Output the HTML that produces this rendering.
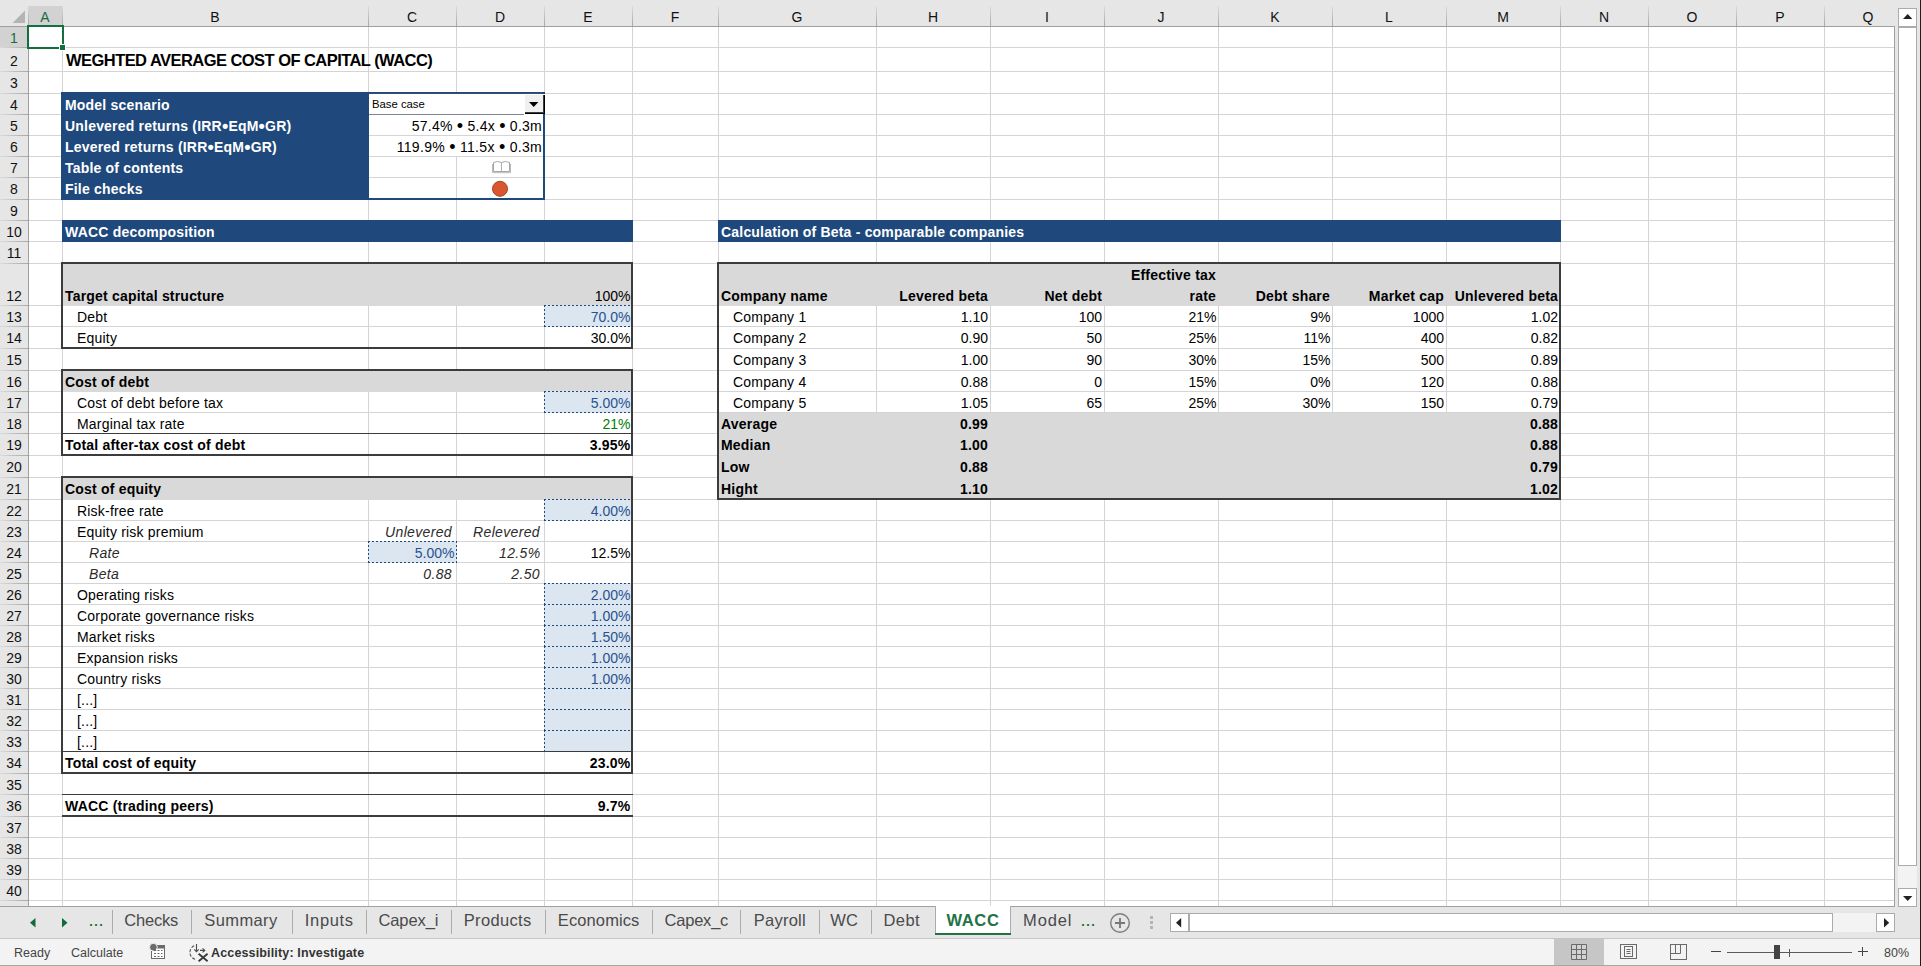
<!DOCTYPE html>
<html><head><meta charset="utf-8"><title>WACC</title><style>
html,body{margin:0;padding:0;background:#fff}
#r{position:relative;width:1921px;height:966px;overflow:hidden;background:#fff;font-family:"Liberation Sans",sans-serif;color:#000}
#r i{position:absolute;display:block}
#r b,#r span,#r em{position:absolute;white-space:nowrap;font-size:14px;line-height:16px;letter-spacing:.2px}
#r span{font-weight:400}
#r em{font-style:italic;letter-spacing:.35px;color:#2b2b2b}
#r u{text-decoration:none;font-size:18px;line-height:0;position:relative;top:1.4px}
#r .rt{text-align:right}
#r span.rt{letter-spacing:0}
#r .w{color:#fff}
#r .in{color:#27528f}
#r .h{color:#111;text-align:center;letter-spacing:0}
#r .tab{font-size:16.5px;line-height:20px;color:#4a4a4a;letter-spacing:0}
#r .st{font-size:12.5px;line-height:16px;color:#444;letter-spacing:0}
#r svg{position:absolute;overflow:visible}
</style></head><body><div id="r">
<i style="left:29px;top:47px;width:1865px;height:1px;background:#d4d4d4;"></i>
<i style="left:29px;top:71px;width:1865px;height:1px;background:#d4d4d4;"></i>
<i style="left:29px;top:93px;width:1865px;height:1px;background:#d4d4d4;"></i>
<i style="left:29px;top:114px;width:1865px;height:1px;background:#d4d4d4;"></i>
<i style="left:29px;top:135px;width:1865px;height:1px;background:#d4d4d4;"></i>
<i style="left:29px;top:156px;width:1865px;height:1px;background:#d4d4d4;"></i>
<i style="left:29px;top:177px;width:1865px;height:1px;background:#d4d4d4;"></i>
<i style="left:29px;top:199px;width:1865px;height:1px;background:#d4d4d4;"></i>
<i style="left:29px;top:220px;width:1865px;height:1px;background:#d4d4d4;"></i>
<i style="left:29px;top:241px;width:1865px;height:1px;background:#d4d4d4;"></i>
<i style="left:29px;top:263px;width:1865px;height:1px;background:#d4d4d4;"></i>
<i style="left:29px;top:305px;width:1865px;height:1px;background:#d4d4d4;"></i>
<i style="left:29px;top:326px;width:1865px;height:1px;background:#d4d4d4;"></i>
<i style="left:29px;top:348px;width:1865px;height:1px;background:#d4d4d4;"></i>
<i style="left:29px;top:370px;width:1865px;height:1px;background:#d4d4d4;"></i>
<i style="left:29px;top:391px;width:1865px;height:1px;background:#d4d4d4;"></i>
<i style="left:29px;top:412px;width:1865px;height:1px;background:#d4d4d4;"></i>
<i style="left:29px;top:433px;width:1865px;height:1px;background:#d4d4d4;"></i>
<i style="left:29px;top:455px;width:1865px;height:1px;background:#d4d4d4;"></i>
<i style="left:29px;top:477px;width:1865px;height:1px;background:#d4d4d4;"></i>
<i style="left:29px;top:499px;width:1865px;height:1px;background:#d4d4d4;"></i>
<i style="left:29px;top:520px;width:1865px;height:1px;background:#d4d4d4;"></i>
<i style="left:29px;top:541px;width:1865px;height:1px;background:#d4d4d4;"></i>
<i style="left:29px;top:562px;width:1865px;height:1px;background:#d4d4d4;"></i>
<i style="left:29px;top:583px;width:1865px;height:1px;background:#d4d4d4;"></i>
<i style="left:29px;top:604px;width:1865px;height:1px;background:#d4d4d4;"></i>
<i style="left:29px;top:625px;width:1865px;height:1px;background:#d4d4d4;"></i>
<i style="left:29px;top:646px;width:1865px;height:1px;background:#d4d4d4;"></i>
<i style="left:29px;top:667px;width:1865px;height:1px;background:#d4d4d4;"></i>
<i style="left:29px;top:688px;width:1865px;height:1px;background:#d4d4d4;"></i>
<i style="left:29px;top:709px;width:1865px;height:1px;background:#d4d4d4;"></i>
<i style="left:29px;top:730px;width:1865px;height:1px;background:#d4d4d4;"></i>
<i style="left:29px;top:751px;width:1865px;height:1px;background:#d4d4d4;"></i>
<i style="left:29px;top:773px;width:1865px;height:1px;background:#d4d4d4;"></i>
<i style="left:29px;top:794px;width:1865px;height:1px;background:#d4d4d4;"></i>
<i style="left:29px;top:816px;width:1865px;height:1px;background:#d4d4d4;"></i>
<i style="left:29px;top:837px;width:1865px;height:1px;background:#d4d4d4;"></i>
<i style="left:29px;top:858px;width:1865px;height:1px;background:#d4d4d4;"></i>
<i style="left:29px;top:879px;width:1865px;height:1px;background:#d4d4d4;"></i>
<i style="left:29px;top:900px;width:1865px;height:1px;background:#d4d4d4;"></i>
<i style="left:62px;top:27px;width:1px;height:879px;background:#d4d4d4;"></i>
<i style="left:368px;top:27px;width:1px;height:879px;background:#d4d4d4;"></i>
<i style="left:456px;top:27px;width:1px;height:879px;background:#d4d4d4;"></i>
<i style="left:544px;top:27px;width:1px;height:879px;background:#d4d4d4;"></i>
<i style="left:632px;top:27px;width:1px;height:879px;background:#d4d4d4;"></i>
<i style="left:718px;top:27px;width:1px;height:879px;background:#d4d4d4;"></i>
<i style="left:876px;top:27px;width:1px;height:879px;background:#d4d4d4;"></i>
<i style="left:990px;top:27px;width:1px;height:879px;background:#d4d4d4;"></i>
<i style="left:1104px;top:27px;width:1px;height:879px;background:#d4d4d4;"></i>
<i style="left:1218px;top:27px;width:1px;height:879px;background:#d4d4d4;"></i>
<i style="left:1332px;top:27px;width:1px;height:879px;background:#d4d4d4;"></i>
<i style="left:1446px;top:27px;width:1px;height:879px;background:#d4d4d4;"></i>
<i style="left:1560px;top:27px;width:1px;height:879px;background:#d4d4d4;"></i>
<i style="left:1648px;top:27px;width:1px;height:879px;background:#d4d4d4;"></i>
<i style="left:1736px;top:27px;width:1px;height:879px;background:#d4d4d4;"></i>
<i style="left:1824px;top:27px;width:1px;height:879px;background:#d4d4d4;"></i>
<i style="left:0px;top:0px;width:1921px;height:27px;background:#e6e6e6;"></i>
<i style="left:0px;top:26px;width:1921px;height:1px;background:#a0a0a0;"></i>
<i style="left:0px;top:27px;width:28px;height:879px;background:#e6e6e6;"></i>
<i style="left:28px;top:27px;width:1px;height:879px;background:#a0a0a0;"></i>
<i style="left:29px;top:6px;width:33px;height:20px;background:#d2d2d2;"></i>
<i style="left:0px;top:27px;width:28px;height:20px;background:#d2d2d2;"></i>
<i style="left:28px;top:6px;width:1px;height:20px;background:;background:linear-gradient(#dcdcdc,#a6a6a6)"></i>
<i style="left:62px;top:6px;width:1px;height:20px;background:;background:linear-gradient(#dcdcdc,#a6a6a6)"></i>
<i style="left:368px;top:6px;width:1px;height:20px;background:;background:linear-gradient(#dcdcdc,#a6a6a6)"></i>
<i style="left:456px;top:6px;width:1px;height:20px;background:;background:linear-gradient(#dcdcdc,#a6a6a6)"></i>
<i style="left:544px;top:6px;width:1px;height:20px;background:;background:linear-gradient(#dcdcdc,#a6a6a6)"></i>
<i style="left:632px;top:6px;width:1px;height:20px;background:;background:linear-gradient(#dcdcdc,#a6a6a6)"></i>
<i style="left:718px;top:6px;width:1px;height:20px;background:;background:linear-gradient(#dcdcdc,#a6a6a6)"></i>
<i style="left:876px;top:6px;width:1px;height:20px;background:;background:linear-gradient(#dcdcdc,#a6a6a6)"></i>
<i style="left:990px;top:6px;width:1px;height:20px;background:;background:linear-gradient(#dcdcdc,#a6a6a6)"></i>
<i style="left:1104px;top:6px;width:1px;height:20px;background:;background:linear-gradient(#dcdcdc,#a6a6a6)"></i>
<i style="left:1218px;top:6px;width:1px;height:20px;background:;background:linear-gradient(#dcdcdc,#a6a6a6)"></i>
<i style="left:1332px;top:6px;width:1px;height:20px;background:;background:linear-gradient(#dcdcdc,#a6a6a6)"></i>
<i style="left:1446px;top:6px;width:1px;height:20px;background:;background:linear-gradient(#dcdcdc,#a6a6a6)"></i>
<i style="left:1560px;top:6px;width:1px;height:20px;background:;background:linear-gradient(#dcdcdc,#a6a6a6)"></i>
<i style="left:1648px;top:6px;width:1px;height:20px;background:;background:linear-gradient(#dcdcdc,#a6a6a6)"></i>
<i style="left:1736px;top:6px;width:1px;height:20px;background:;background:linear-gradient(#dcdcdc,#a6a6a6)"></i>
<i style="left:1824px;top:6px;width:1px;height:20px;background:;background:linear-gradient(#dcdcdc,#a6a6a6)"></i>
<i style="left:0px;top:47px;width:28px;height:1px;background:;background:linear-gradient(90deg,#dcdcdc,#a6a6a6)"></i>
<i style="left:0px;top:71px;width:28px;height:1px;background:;background:linear-gradient(90deg,#dcdcdc,#a6a6a6)"></i>
<i style="left:0px;top:93px;width:28px;height:1px;background:;background:linear-gradient(90deg,#dcdcdc,#a6a6a6)"></i>
<i style="left:0px;top:114px;width:28px;height:1px;background:;background:linear-gradient(90deg,#dcdcdc,#a6a6a6)"></i>
<i style="left:0px;top:135px;width:28px;height:1px;background:;background:linear-gradient(90deg,#dcdcdc,#a6a6a6)"></i>
<i style="left:0px;top:156px;width:28px;height:1px;background:;background:linear-gradient(90deg,#dcdcdc,#a6a6a6)"></i>
<i style="left:0px;top:177px;width:28px;height:1px;background:;background:linear-gradient(90deg,#dcdcdc,#a6a6a6)"></i>
<i style="left:0px;top:199px;width:28px;height:1px;background:;background:linear-gradient(90deg,#dcdcdc,#a6a6a6)"></i>
<i style="left:0px;top:220px;width:28px;height:1px;background:;background:linear-gradient(90deg,#dcdcdc,#a6a6a6)"></i>
<i style="left:0px;top:241px;width:28px;height:1px;background:;background:linear-gradient(90deg,#dcdcdc,#a6a6a6)"></i>
<i style="left:0px;top:263px;width:28px;height:1px;background:;background:linear-gradient(90deg,#dcdcdc,#a6a6a6)"></i>
<i style="left:0px;top:305px;width:28px;height:1px;background:;background:linear-gradient(90deg,#dcdcdc,#a6a6a6)"></i>
<i style="left:0px;top:326px;width:28px;height:1px;background:;background:linear-gradient(90deg,#dcdcdc,#a6a6a6)"></i>
<i style="left:0px;top:348px;width:28px;height:1px;background:;background:linear-gradient(90deg,#dcdcdc,#a6a6a6)"></i>
<i style="left:0px;top:370px;width:28px;height:1px;background:;background:linear-gradient(90deg,#dcdcdc,#a6a6a6)"></i>
<i style="left:0px;top:391px;width:28px;height:1px;background:;background:linear-gradient(90deg,#dcdcdc,#a6a6a6)"></i>
<i style="left:0px;top:412px;width:28px;height:1px;background:;background:linear-gradient(90deg,#dcdcdc,#a6a6a6)"></i>
<i style="left:0px;top:433px;width:28px;height:1px;background:;background:linear-gradient(90deg,#dcdcdc,#a6a6a6)"></i>
<i style="left:0px;top:455px;width:28px;height:1px;background:;background:linear-gradient(90deg,#dcdcdc,#a6a6a6)"></i>
<i style="left:0px;top:477px;width:28px;height:1px;background:;background:linear-gradient(90deg,#dcdcdc,#a6a6a6)"></i>
<i style="left:0px;top:499px;width:28px;height:1px;background:;background:linear-gradient(90deg,#dcdcdc,#a6a6a6)"></i>
<i style="left:0px;top:520px;width:28px;height:1px;background:;background:linear-gradient(90deg,#dcdcdc,#a6a6a6)"></i>
<i style="left:0px;top:541px;width:28px;height:1px;background:;background:linear-gradient(90deg,#dcdcdc,#a6a6a6)"></i>
<i style="left:0px;top:562px;width:28px;height:1px;background:;background:linear-gradient(90deg,#dcdcdc,#a6a6a6)"></i>
<i style="left:0px;top:583px;width:28px;height:1px;background:;background:linear-gradient(90deg,#dcdcdc,#a6a6a6)"></i>
<i style="left:0px;top:604px;width:28px;height:1px;background:;background:linear-gradient(90deg,#dcdcdc,#a6a6a6)"></i>
<i style="left:0px;top:625px;width:28px;height:1px;background:;background:linear-gradient(90deg,#dcdcdc,#a6a6a6)"></i>
<i style="left:0px;top:646px;width:28px;height:1px;background:;background:linear-gradient(90deg,#dcdcdc,#a6a6a6)"></i>
<i style="left:0px;top:667px;width:28px;height:1px;background:;background:linear-gradient(90deg,#dcdcdc,#a6a6a6)"></i>
<i style="left:0px;top:688px;width:28px;height:1px;background:;background:linear-gradient(90deg,#dcdcdc,#a6a6a6)"></i>
<i style="left:0px;top:709px;width:28px;height:1px;background:;background:linear-gradient(90deg,#dcdcdc,#a6a6a6)"></i>
<i style="left:0px;top:730px;width:28px;height:1px;background:;background:linear-gradient(90deg,#dcdcdc,#a6a6a6)"></i>
<i style="left:0px;top:751px;width:28px;height:1px;background:;background:linear-gradient(90deg,#dcdcdc,#a6a6a6)"></i>
<i style="left:0px;top:773px;width:28px;height:1px;background:;background:linear-gradient(90deg,#dcdcdc,#a6a6a6)"></i>
<i style="left:0px;top:794px;width:28px;height:1px;background:;background:linear-gradient(90deg,#dcdcdc,#a6a6a6)"></i>
<i style="left:0px;top:816px;width:28px;height:1px;background:;background:linear-gradient(90deg,#dcdcdc,#a6a6a6)"></i>
<i style="left:0px;top:837px;width:28px;height:1px;background:;background:linear-gradient(90deg,#dcdcdc,#a6a6a6)"></i>
<i style="left:0px;top:858px;width:28px;height:1px;background:;background:linear-gradient(90deg,#dcdcdc,#a6a6a6)"></i>
<i style="left:0px;top:879px;width:28px;height:1px;background:;background:linear-gradient(90deg,#dcdcdc,#a6a6a6)"></i>
<i style="left:0px;top:900px;width:28px;height:1px;background:;background:linear-gradient(90deg,#dcdcdc,#a6a6a6)"></i>
<svg style="left:0;top:0" width="28" height="26"><polygon points="12.5,23 25,23 25,10.5" fill="#b4b4b4"/></svg>
<span class="h" style="left:25.0px;top:9px;width:40px;color:#1a6b3f">A</span>
<span class="h" style="left:195.0px;top:9px;width:40px;color:#111">B</span>
<span class="h" style="left:392.0px;top:9px;width:40px;color:#111">C</span>
<span class="h" style="left:480.0px;top:9px;width:40px;color:#111">D</span>
<span class="h" style="left:568.0px;top:9px;width:40px;color:#111">E</span>
<span class="h" style="left:655.0px;top:9px;width:40px;color:#111">F</span>
<span class="h" style="left:777.0px;top:9px;width:40px;color:#111">G</span>
<span class="h" style="left:913.0px;top:9px;width:40px;color:#111">H</span>
<span class="h" style="left:1027.0px;top:9px;width:40px;color:#111">I</span>
<span class="h" style="left:1141.0px;top:9px;width:40px;color:#111">J</span>
<span class="h" style="left:1255.0px;top:9px;width:40px;color:#111">K</span>
<span class="h" style="left:1369.0px;top:9px;width:40px;color:#111">L</span>
<span class="h" style="left:1483.0px;top:9px;width:40px;color:#111">M</span>
<span class="h" style="left:1584.0px;top:9px;width:40px;color:#111">N</span>
<span class="h" style="left:1672.0px;top:9px;width:40px;color:#111">O</span>
<span class="h" style="left:1760.0px;top:9px;width:40px;color:#111">P</span>
<span class="h" style="left:1848.0px;top:9px;width:40px;color:#111">Q</span>
<span class="h" style="left:0;top:30px;width:28px;color:#1a6b3f">1</span>
<span class="h" style="left:0;top:53px;width:28px;color:#111">2</span>
<span class="h" style="left:0;top:75px;width:28px;color:#111">3</span>
<span class="h" style="left:0;top:97px;width:28px;color:#111">4</span>
<span class="h" style="left:0;top:118px;width:28px;color:#111">5</span>
<span class="h" style="left:0;top:139px;width:28px;color:#111">6</span>
<span class="h" style="left:0;top:160px;width:28px;color:#111">7</span>
<span class="h" style="left:0;top:181px;width:28px;color:#111">8</span>
<span class="h" style="left:0;top:203px;width:28px;color:#111">9</span>
<span class="h" style="left:0;top:224px;width:28px;color:#111">10</span>
<span class="h" style="left:0;top:245px;width:28px;color:#111">11</span>
<span class="h" style="left:0;top:288px;width:28px;color:#111">12</span>
<span class="h" style="left:0;top:309px;width:28px;color:#111">13</span>
<span class="h" style="left:0;top:330px;width:28px;color:#111">14</span>
<span class="h" style="left:0;top:352px;width:28px;color:#111">15</span>
<span class="h" style="left:0;top:374px;width:28px;color:#111">16</span>
<span class="h" style="left:0;top:395px;width:28px;color:#111">17</span>
<span class="h" style="left:0;top:416px;width:28px;color:#111">18</span>
<span class="h" style="left:0;top:437px;width:28px;color:#111">19</span>
<span class="h" style="left:0;top:459px;width:28px;color:#111">20</span>
<span class="h" style="left:0;top:481px;width:28px;color:#111">21</span>
<span class="h" style="left:0;top:503px;width:28px;color:#111">22</span>
<span class="h" style="left:0;top:524px;width:28px;color:#111">23</span>
<span class="h" style="left:0;top:545px;width:28px;color:#111">24</span>
<span class="h" style="left:0;top:566px;width:28px;color:#111">25</span>
<span class="h" style="left:0;top:587px;width:28px;color:#111">26</span>
<span class="h" style="left:0;top:608px;width:28px;color:#111">27</span>
<span class="h" style="left:0;top:629px;width:28px;color:#111">28</span>
<span class="h" style="left:0;top:650px;width:28px;color:#111">29</span>
<span class="h" style="left:0;top:671px;width:28px;color:#111">30</span>
<span class="h" style="left:0;top:692px;width:28px;color:#111">31</span>
<span class="h" style="left:0;top:713px;width:28px;color:#111">32</span>
<span class="h" style="left:0;top:734px;width:28px;color:#111">33</span>
<span class="h" style="left:0;top:755px;width:28px;color:#111">34</span>
<span class="h" style="left:0;top:777px;width:28px;color:#111">35</span>
<span class="h" style="left:0;top:798px;width:28px;color:#111">36</span>
<span class="h" style="left:0;top:820px;width:28px;color:#111">37</span>
<span class="h" style="left:0;top:841px;width:28px;color:#111">38</span>
<span class="h" style="left:0;top:862px;width:28px;color:#111">39</span>
<span class="h" style="left:0;top:883px;width:28px;color:#111">40</span>
<i style="left:61px;top:92px;width:308px;height:108px;background:#1f497d;"></i>
<i style="left:369px;top:92px;width:176px;height:2px;background:#1f497d;"></i>
<i style="left:543px;top:92px;width:2px;height:108px;background:#1f497d;"></i>
<i style="left:369px;top:198px;width:176px;height:2px;background:#1f497d;"></i>
<i style="left:456px;top:94px;width:1px;height:63px;background:#fff;"></i>
<i style="left:456px;top:114px;width:1px;height:1px;background:#d4d4d4;"></i>
<i style="left:456px;top:135px;width:1px;height:1px;background:#d4d4d4;"></i>
<i style="left:456px;top:156px;width:1px;height:1px;background:#d4d4d4;"></i>
<i style="left:62px;top:220px;width:571px;height:22px;background:#1f497d;"></i>
<i style="left:718px;top:220px;width:843px;height:22px;background:#1f497d;"></i>
<i style="left:63px;top:264px;width:568px;height:42px;background:#d9d9d9;"></i>
<i style="left:63px;top:371px;width:568px;height:21px;background:#d9d9d9;"></i>
<i style="left:63px;top:478px;width:568px;height:22px;background:#d9d9d9;"></i>
<i style="left:719px;top:264px;width:840px;height:42px;background:#d9d9d9;"></i>
<i style="left:719px;top:413px;width:840px;height:85px;background:#d9d9d9;"></i>
<i style="left:61px;top:262px;width:572px;height:2px;background:#3c3c3c;"></i>
<i style="left:61px;top:347px;width:572px;height:2px;background:#3c3c3c;"></i>
<i style="left:61px;top:262px;width:2px;height:87px;background:#3c3c3c;"></i>
<i style="left:631px;top:262px;width:2px;height:87px;background:#3c3c3c;"></i>
<i style="left:61px;top:369px;width:572px;height:2px;background:#3c3c3c;"></i>
<i style="left:61px;top:454px;width:572px;height:2px;background:#3c3c3c;"></i>
<i style="left:61px;top:369px;width:2px;height:87px;background:#3c3c3c;"></i>
<i style="left:631px;top:369px;width:2px;height:87px;background:#3c3c3c;"></i>
<i style="left:61px;top:476px;width:572px;height:2px;background:#3c3c3c;"></i>
<i style="left:61px;top:772px;width:572px;height:2px;background:#3c3c3c;"></i>
<i style="left:61px;top:476px;width:2px;height:298px;background:#3c3c3c;"></i>
<i style="left:631px;top:476px;width:2px;height:298px;background:#3c3c3c;"></i>
<i style="left:717px;top:262px;width:844px;height:2px;background:#3c3c3c;"></i>
<i style="left:717px;top:498px;width:844px;height:2px;background:#3c3c3c;"></i>
<i style="left:717px;top:262px;width:2px;height:238px;background:#3c3c3c;"></i>
<i style="left:1559px;top:262px;width:2px;height:238px;background:#3c3c3c;"></i>
<i style="left:63px;top:433px;width:568px;height:1px;background:#3c3c3c;"></i>
<i style="left:63px;top:751px;width:568px;height:1px;background:#3c3c3c;"></i>
<i style="left:62px;top:794px;width:571px;height:1px;background:#3c3c3c;"></i>
<i style="left:62px;top:815px;width:571px;height:2px;background:#3c3c3c;"></i>
<i style="left:545px;top:306px;width:86px;height:20px;background:#dce6f1;"></i>
<i style="left:544px;top:305px;width:87px;height:1px;background:#fff;background:repeating-linear-gradient(90deg,#1f497d 0 2px,transparent 2px 4px),#dce6f1"></i>
<i style="left:544px;top:326px;width:87px;height:1px;background:#fff;background:repeating-linear-gradient(90deg,#1f497d 0 2px,transparent 2px 4px),#dce6f1"></i>
<i style="left:544px;top:305px;width:1px;height:22px;background:#fff;background:repeating-linear-gradient(180deg,#1f497d 0 2px,transparent 2px 4px),#dce6f1"></i>
<i style="left:545px;top:392px;width:86px;height:20px;background:#dce6f1;"></i>
<i style="left:544px;top:391px;width:87px;height:1px;background:#fff;background:repeating-linear-gradient(90deg,#1f497d 0 2px,transparent 2px 4px),#dce6f1"></i>
<i style="left:544px;top:412px;width:87px;height:1px;background:#fff;background:repeating-linear-gradient(90deg,#1f497d 0 2px,transparent 2px 4px),#dce6f1"></i>
<i style="left:544px;top:391px;width:1px;height:22px;background:#fff;background:repeating-linear-gradient(180deg,#1f497d 0 2px,transparent 2px 4px),#dce6f1"></i>
<i style="left:545px;top:500px;width:86px;height:20px;background:#dce6f1;"></i>
<i style="left:544px;top:499px;width:87px;height:1px;background:#fff;background:repeating-linear-gradient(90deg,#1f497d 0 2px,transparent 2px 4px),#dce6f1"></i>
<i style="left:544px;top:520px;width:87px;height:1px;background:#fff;background:repeating-linear-gradient(90deg,#1f497d 0 2px,transparent 2px 4px),#dce6f1"></i>
<i style="left:544px;top:499px;width:1px;height:22px;background:#fff;background:repeating-linear-gradient(180deg,#1f497d 0 2px,transparent 2px 4px),#dce6f1"></i>
<i style="left:545px;top:584px;width:86px;height:20px;background:#dce6f1;"></i>
<i style="left:544px;top:583px;width:87px;height:1px;background:#fff;background:repeating-linear-gradient(90deg,#1f497d 0 2px,transparent 2px 4px),#dce6f1"></i>
<i style="left:544px;top:604px;width:87px;height:1px;background:#fff;background:repeating-linear-gradient(90deg,#1f497d 0 2px,transparent 2px 4px),#dce6f1"></i>
<i style="left:544px;top:583px;width:1px;height:22px;background:#fff;background:repeating-linear-gradient(180deg,#1f497d 0 2px,transparent 2px 4px),#dce6f1"></i>
<i style="left:545px;top:605px;width:86px;height:20px;background:#dce6f1;"></i>
<i style="left:544px;top:604px;width:87px;height:1px;background:#fff;background:repeating-linear-gradient(90deg,#1f497d 0 2px,transparent 2px 4px),#dce6f1"></i>
<i style="left:544px;top:625px;width:87px;height:1px;background:#fff;background:repeating-linear-gradient(90deg,#1f497d 0 2px,transparent 2px 4px),#dce6f1"></i>
<i style="left:544px;top:604px;width:1px;height:22px;background:#fff;background:repeating-linear-gradient(180deg,#1f497d 0 2px,transparent 2px 4px),#dce6f1"></i>
<i style="left:545px;top:626px;width:86px;height:20px;background:#dce6f1;"></i>
<i style="left:544px;top:625px;width:87px;height:1px;background:#fff;background:repeating-linear-gradient(90deg,#1f497d 0 2px,transparent 2px 4px),#dce6f1"></i>
<i style="left:544px;top:646px;width:87px;height:1px;background:#fff;background:repeating-linear-gradient(90deg,#1f497d 0 2px,transparent 2px 4px),#dce6f1"></i>
<i style="left:544px;top:625px;width:1px;height:22px;background:#fff;background:repeating-linear-gradient(180deg,#1f497d 0 2px,transparent 2px 4px),#dce6f1"></i>
<i style="left:545px;top:647px;width:86px;height:20px;background:#dce6f1;"></i>
<i style="left:544px;top:646px;width:87px;height:1px;background:#fff;background:repeating-linear-gradient(90deg,#1f497d 0 2px,transparent 2px 4px),#dce6f1"></i>
<i style="left:544px;top:667px;width:87px;height:1px;background:#fff;background:repeating-linear-gradient(90deg,#1f497d 0 2px,transparent 2px 4px),#dce6f1"></i>
<i style="left:544px;top:646px;width:1px;height:22px;background:#fff;background:repeating-linear-gradient(180deg,#1f497d 0 2px,transparent 2px 4px),#dce6f1"></i>
<i style="left:545px;top:668px;width:86px;height:20px;background:#dce6f1;"></i>
<i style="left:544px;top:667px;width:87px;height:1px;background:#fff;background:repeating-linear-gradient(90deg,#1f497d 0 2px,transparent 2px 4px),#dce6f1"></i>
<i style="left:544px;top:688px;width:87px;height:1px;background:#fff;background:repeating-linear-gradient(90deg,#1f497d 0 2px,transparent 2px 4px),#dce6f1"></i>
<i style="left:544px;top:667px;width:1px;height:22px;background:#fff;background:repeating-linear-gradient(180deg,#1f497d 0 2px,transparent 2px 4px),#dce6f1"></i>
<i style="left:545px;top:689px;width:86px;height:20px;background:#dce6f1;"></i>
<i style="left:544px;top:688px;width:87px;height:1px;background:#fff;background:repeating-linear-gradient(90deg,#1f497d 0 2px,transparent 2px 4px),#dce6f1"></i>
<i style="left:544px;top:709px;width:87px;height:1px;background:#fff;background:repeating-linear-gradient(90deg,#1f497d 0 2px,transparent 2px 4px),#dce6f1"></i>
<i style="left:544px;top:688px;width:1px;height:22px;background:#fff;background:repeating-linear-gradient(180deg,#1f497d 0 2px,transparent 2px 4px),#dce6f1"></i>
<i style="left:545px;top:710px;width:86px;height:20px;background:#dce6f1;"></i>
<i style="left:544px;top:709px;width:87px;height:1px;background:#fff;background:repeating-linear-gradient(90deg,#1f497d 0 2px,transparent 2px 4px),#dce6f1"></i>
<i style="left:544px;top:730px;width:87px;height:1px;background:#fff;background:repeating-linear-gradient(90deg,#1f497d 0 2px,transparent 2px 4px),#dce6f1"></i>
<i style="left:544px;top:709px;width:1px;height:22px;background:#fff;background:repeating-linear-gradient(180deg,#1f497d 0 2px,transparent 2px 4px),#dce6f1"></i>
<i style="left:545px;top:731px;width:86px;height:20px;background:#dce6f1;"></i>
<i style="left:544px;top:730px;width:87px;height:1px;background:#fff;background:repeating-linear-gradient(90deg,#1f497d 0 2px,transparent 2px 4px),#dce6f1"></i>
<i style="left:544px;top:730px;width:1px;height:22px;background:#fff;background:repeating-linear-gradient(180deg,#1f497d 0 2px,transparent 2px 4px),#dce6f1"></i>
<i style="left:369px;top:542px;width:87px;height:20px;background:#dce6f1;"></i>
<i style="left:368px;top:541px;width:88px;height:1px;background:#fff;background:repeating-linear-gradient(90deg,#1f497d 0 2px,transparent 2px 4px),#dce6f1"></i>
<i style="left:368px;top:562px;width:88px;height:1px;background:#fff;background:repeating-linear-gradient(90deg,#1f497d 0 2px,transparent 2px 4px),#dce6f1"></i>
<i style="left:368px;top:541px;width:1px;height:22px;background:#fff;background:repeating-linear-gradient(180deg,#1f497d 0 2px,transparent 2px 4px),#dce6f1"></i>
<i style="left:456px;top:541px;width:1px;height:22px;background:#fff;background:repeating-linear-gradient(180deg,#1f497d 0 2px,transparent 2px 4px),#dce6f1"></i>
<b style="left:66px;top:50px;font-size:16.5px;line-height:20px;letter-spacing:-.55px">WEGHTED AVERAGE COST OF CAPITAL (WACC)</b>
<b class="w" style="left:65px;top:97px;">Model scenario</b>
<b class="w" style="left:65px;top:118px;">Unlevered returns (IRR<u>•</u>EqM<u>•</u>GR)</b>
<b class="w" style="left:65px;top:139px;">Levered returns (IRR<u>•</u>EqM<u>•</u>GR)</b>
<b class="w" style="left:65px;top:160px;">Table of contents</b>
<b class="w" style="left:65px;top:181px;">File checks</b>
<span class="rt " style="right:1379px;top:118px;letter-spacing:.25px">57.4% <u>•</u> 5.4x <u>•</u> 0.3m</span>
<span class="rt " style="right:1379px;top:139px;letter-spacing:.3px">119.9% <u>•</u> 11.5x <u>•</u> 0.3m</span>
<b class="w" style="left:65px;top:224px;">WACC decomposition</b>
<b class="w" style="left:721px;top:224px;">Calculation of Beta - comparable companies</b>
<b class="" style="left:65px;top:288px;">Target capital structure</b>
<span class="rt " style="right:1290.5px;top:288px;">100%</span>
<span class="" style="left:77px;top:309px;">Debt</span>
<span class="rt in" style="right:1290.5px;top:309px;">70.0%</span>
<span class="" style="left:77px;top:330px;">Equity</span>
<span class="rt " style="right:1290.5px;top:330px;">30.0%</span>
<b class="" style="left:65px;top:374px;">Cost of debt</b>
<span class="" style="left:77px;top:395px;">Cost of debt before tax</span>
<span class="rt in" style="right:1290.5px;top:395px;">5.00%</span>
<span class="" style="left:77px;top:416px;">Marginal tax rate</span>
<span class="rt " style="right:1290.5px;top:416px;color:#008000">21%</span>
<b class="" style="left:65px;top:437px;">Total after-tax cost of debt</b>
<b class="rt " style="right:1290.5px;top:437px;">3.95%</b>
<b class="" style="left:65px;top:481px;">Cost of equity</b>
<span class="" style="left:77px;top:503px;">Risk-free rate</span>
<span class="rt in" style="right:1290.5px;top:503px;">4.00%</span>
<span class="" style="left:77px;top:524px;">Equity risk premium</span>
<em class="rt " style="right:1469px;top:524px;">Unlevered</em>
<em class="rt " style="right:1381px;top:524px;">Relevered</em>
<em class="" style="left:89px;top:545px;">Rate</em>
<span class="rt in" style="right:1466.5px;top:545px;">5.00%</span>
<em class="rt " style="right:1380.5px;top:545px;">12.5%</em>
<span class="rt " style="right:1290.5px;top:545px;">12.5%</span>
<em class="" style="left:89px;top:566px;">Beta</em>
<em class="rt " style="right:1469px;top:566px;">0.88</em>
<em class="rt " style="right:1381px;top:566px;">2.50</em>
<span class="" style="left:77px;top:587px;">Operating risks</span>
<span class="rt in" style="right:1290.5px;top:587px;">2.00%</span>
<span class="" style="left:77px;top:608px;">Corporate governance risks</span>
<span class="rt in" style="right:1290.5px;top:608px;">1.00%</span>
<span class="" style="left:77px;top:629px;">Market risks</span>
<span class="rt in" style="right:1290.5px;top:629px;">1.50%</span>
<span class="" style="left:77px;top:650px;">Expansion risks</span>
<span class="rt in" style="right:1290.5px;top:650px;">1.00%</span>
<span class="" style="left:77px;top:671px;">Country risks</span>
<span class="rt in" style="right:1290.5px;top:671px;">1.00%</span>
<span class="" style="left:77px;top:692px;">[...]</span>
<span class="" style="left:77px;top:713px;">[...]</span>
<span class="" style="left:77px;top:734px;">[...]</span>
<b class="" style="left:65px;top:755px;">Total cost of equity</b>
<b class="rt " style="right:1290.5px;top:755px;">23.0%</b>
<b class="" style="left:65px;top:798px;">WACC (trading peers)</b>
<b class="rt " style="right:1290.5px;top:798px;">9.7%</b>
<b class="" style="left:721px;top:288px;">Company name</b>
<b class="rt " style="right:933px;top:288px;">Levered beta</b>
<b class="rt " style="right:819px;top:288px;">Net debt</b>
<b class="rt " style="right:705px;top:288px;">rate</b>
<b class="rt " style="right:591px;top:288px;">Debt share</b>
<b class="rt " style="right:477px;top:288px;">Market cap</b>
<b class="rt " style="right:363px;top:288px;">Unlevered beta</b>
<b class="rt " style="right:705px;top:267px;">Effective tax</b>
<span class="" style="left:733px;top:309px;">Company 1</span>
<span class="rt " style="right:933px;top:309px;">1.10</span>
<span class="rt " style="right:819px;top:309px;">100</span>
<span class="rt " style="right:704.5px;top:309px;">21%</span>
<span class="rt " style="right:590.5px;top:309px;">9%</span>
<span class="rt " style="right:477px;top:309px;">1000</span>
<span class="rt " style="right:363px;top:309px;">1.02</span>
<span class="" style="left:733px;top:330px;">Company 2</span>
<span class="rt " style="right:933px;top:330px;">0.90</span>
<span class="rt " style="right:819px;top:330px;">50</span>
<span class="rt " style="right:704.5px;top:330px;">25%</span>
<span class="rt " style="right:590.5px;top:330px;">11%</span>
<span class="rt " style="right:477px;top:330px;">400</span>
<span class="rt " style="right:363px;top:330px;">0.82</span>
<span class="" style="left:733px;top:352px;">Company 3</span>
<span class="rt " style="right:933px;top:352px;">1.00</span>
<span class="rt " style="right:819px;top:352px;">90</span>
<span class="rt " style="right:704.5px;top:352px;">30%</span>
<span class="rt " style="right:590.5px;top:352px;">15%</span>
<span class="rt " style="right:477px;top:352px;">500</span>
<span class="rt " style="right:363px;top:352px;">0.89</span>
<span class="" style="left:733px;top:374px;">Company 4</span>
<span class="rt " style="right:933px;top:374px;">0.88</span>
<span class="rt " style="right:819px;top:374px;">0</span>
<span class="rt " style="right:704.5px;top:374px;">15%</span>
<span class="rt " style="right:590.5px;top:374px;">0%</span>
<span class="rt " style="right:477px;top:374px;">120</span>
<span class="rt " style="right:363px;top:374px;">0.88</span>
<span class="" style="left:733px;top:395px;">Company 5</span>
<span class="rt " style="right:933px;top:395px;">1.05</span>
<span class="rt " style="right:819px;top:395px;">65</span>
<span class="rt " style="right:704.5px;top:395px;">25%</span>
<span class="rt " style="right:590.5px;top:395px;">30%</span>
<span class="rt " style="right:477px;top:395px;">150</span>
<span class="rt " style="right:363px;top:395px;">0.79</span>
<b class="" style="left:721px;top:416px;">Average</b>
<b class="rt " style="right:933px;top:416px;">0.99</b>
<b class="rt " style="right:363px;top:416px;">0.88</b>
<b class="" style="left:721px;top:437px;">Median</b>
<b class="rt " style="right:933px;top:437px;">1.00</b>
<b class="rt " style="right:363px;top:437px;">0.88</b>
<b class="" style="left:721px;top:459px;">Low</b>
<b class="rt " style="right:933px;top:459px;">0.88</b>
<b class="rt " style="right:363px;top:459px;">0.79</b>
<b class="" style="left:721px;top:481px;">Hight</b>
<b class="rt " style="right:933px;top:481px;">1.10</b>
<b class="rt " style="right:363px;top:481px;">1.02</b>
<i style="left:369px;top:94px;width:174px;height:21px;background:#fff;"></i>
<i style="left:369px;top:93px;width:174px;height:1px;background:#3a4f6e;"></i>
<i style="left:369px;top:114px;width:155px;height:1px;background:#7c8597;"></i>
<i style="left:524px;top:94px;width:21px;height:20px;background:#f0f0f0;box-shadow:inset 1px 1px 0 #fff,inset -1px -1px 0 #000,inset -2px -2px 0 #3c3c3c"></i>
<svg style="left:529px;top:102px" width="10" height="5"><polygon points="0,0 9.4,0 4.7,5" fill="#000"/></svg>
<span style="left:372px;top:97px;font-size:11.3px;line-height:14px;letter-spacing:0">Base case</span>
<svg style="left:491.5px;top:159.7px" width="19" height="14" viewBox="0 0 19 14"><path d="M1.5 2.5 Q5.5 .5 9.5 2.5 Q13.5 .5 17.5 2.5 V11.5 H1.5 Z" fill="#fff" stroke="#a6a6a6" stroke-width="1"/><path d="M9.5 2.5 V11.5" stroke="#b0b0b0" stroke-width="1" fill="none"/><path d="M.5 4 V12.7 H18.5 V4" stroke="#b8b8b8" stroke-width="1" fill="none"/></svg>
<svg style="left:491px;top:180px" width="18" height="18"><circle cx="9" cy="8.8" r="7.5" fill="#d85730" stroke="#aa4120" stroke-width="1"/></svg>
<i style="left:27px;top:25px;width:37px;height:24px;background:;border:2px solid #107040;box-sizing:border-box;background:transparent"></i>
<i style="left:60px;top:45px;width:6px;height:6px;background:#107040;border:1px solid #fff;box-sizing:content-box;left:59px;top:44px;width:5px;height:5px"></i>
<i style="left:1894px;top:27px;width:1px;height:880px;background:#a0a0a0;"></i>
<i style="left:1895px;top:0px;width:26px;height:908px;background:#e6e6e6;"></i>
<i style="left:1898px;top:8px;width:19px;height:19px;background:#fff;box-shadow:inset 0 0 0 1px #ababab"></i>
<svg style="left:1903px;top:14px" width="10" height="5"><polygon points="0,5 9.4,5 4.7,0" fill="#222"/></svg>
<i style="left:1898px;top:27px;width:19px;height:839px;background:#fff;box-shadow:inset 0 0 0 1px #ababab"></i>
<i style="left:1898px;top:866px;width:19px;height:22px;background:#f3f3f3;"></i>
<i style="left:1898px;top:888px;width:19px;height:19px;background:#fff;box-shadow:inset 0 0 0 1px #ababab"></i>
<svg style="left:1903px;top:896px" width="10" height="5"><polygon points="0,0 9.4,0 4.7,5" fill="#222"/></svg>
<i style="left:0px;top:906px;width:1895px;height:1px;background:#a0a0a0;"></i>
<i style="left:0px;top:907px;width:1921px;height:32px;background:#e6e6e6;"></i>
<i style="left:0px;top:938px;width:1921px;height:1px;background:#c6c6c6;"></i>
<i style="left:0px;top:939px;width:1921px;height:27px;background:#f3f3f3;"></i>
<i style="left:0px;top:965px;width:1921px;height:1px;background:#a6a6a6;"></i>
<svg style="left:30px;top:918px" width="6" height="10"><polygon points="5.5,0 5.5,9.5 0,4.75" fill="#106b3a"/></svg>
<svg style="left:62px;top:918px" width="6" height="10"><polygon points="0,0 0,9.5 5.5,4.75" fill="#106b3a"/></svg>
<span class="tab" style="left:88.5px;top:910px;color:#106b3a;font-size:18px">...</span>
<i style="left:112px;top:910px;width:1px;height:24px;background:#ababab;"></i>
<span class="tab" style="left:124.3px;top:910px;letter-spacing:-0.22px">Checks</span>
<i style="left:191px;top:910px;width:1px;height:24px;background:#ababab;"></i>
<span class="tab" style="left:204.3px;top:910px;letter-spacing:0.39px">Summary</span>
<i style="left:292px;top:910px;width:1px;height:24px;background:#ababab;"></i>
<span class="tab" style="left:304.8px;top:910px;letter-spacing:0.67px">Inputs</span>
<i style="left:366px;top:910px;width:1px;height:24px;background:#ababab;"></i>
<span class="tab" style="left:378.5px;top:910px;letter-spacing:-0.11px">Capex_i</span>
<i style="left:451px;top:910px;width:1px;height:24px;background:#ababab;"></i>
<span class="tab" style="left:463.7px;top:910px;letter-spacing:0.35px">Products</span>
<i style="left:545px;top:910px;width:1px;height:24px;background:#ababab;"></i>
<span class="tab" style="left:557.8px;top:910px;letter-spacing:0.11px">Economics</span>
<i style="left:652px;top:910px;width:1px;height:24px;background:#ababab;"></i>
<span class="tab" style="left:664.5px;top:910px;letter-spacing:-0.21px">Capex_c</span>
<i style="left:740px;top:910px;width:1px;height:24px;background:#ababab;"></i>
<span class="tab" style="left:753.7px;top:910px;letter-spacing:0.26px">Payroll</span>
<i style="left:819px;top:910px;width:1px;height:24px;background:#ababab;"></i>
<span class="tab" style="left:830.3px;top:910px;letter-spacing:0.25px">WC</span>
<i style="left:871px;top:910px;width:1px;height:24px;background:#ababab;"></i>
<span class="tab" style="left:883.5px;top:910px;letter-spacing:0.45px">Debt</span>
<i style="left:935px;top:906px;width:76px;height:29px;background:#fff;"></i>
<i style="left:935px;top:906px;width:1px;height:27px;background:#ababab;"></i>
<i style="left:1010px;top:906px;width:1px;height:27px;background:#ababab;"></i>
<i style="left:935px;top:933px;width:76px;height:2px;background:#217346;"></i>
<b class="tab" style="left:935px;width:76px;text-align:center;top:910px;color:#217346;letter-spacing:.6px">WACC</b>
<span class="tab" style="left:1023px;top:910px;letter-spacing:.9px">Model</span>
<span class="tab" style="left:1080.5px;top:910px;color:#106b3a;font-size:18px">...</span>
<svg style="left:1110px;top:913px" width="20" height="20"><circle cx="10" cy="10" r="9.3" fill="none" stroke="#7d7d7d" stroke-width="1.4"/><path d="M5 10 H15 M10 5 V15" stroke="#777" stroke-width="1.8"/></svg>
<i style="left:1150px;top:916px;width:3px;height:3px;background:#b4b4b4;"></i>
<i style="left:1150px;top:921px;width:3px;height:3px;background:#b4b4b4;"></i>
<i style="left:1150px;top:926px;width:3px;height:3px;background:#b4b4b4;"></i>
<i style="left:1170px;top:913px;width:19px;height:19px;background:#fff;box-shadow:inset 0 0 0 1px #ababab"></i>
<svg style="left:1176px;top:918px" width="6" height="10"><polygon points="5.2,0 5.2,9.4 0,4.7" fill="#222"/></svg>
<i style="left:1189px;top:913px;width:644px;height:19px;background:#fff;box-shadow:inset 0 0 0 1px #ababab"></i>
<i style="left:1833px;top:913px;width:43px;height:19px;background:#f3f3f3;"></i>
<i style="left:1876px;top:913px;width:19px;height:19px;background:#fff;box-shadow:inset 0 0 0 1px #ababab"></i>
<svg style="left:1884px;top:918px" width="6" height="10"><polygon points="0,0 0,9.4 5.2,4.7" fill="#222"/></svg>
<span class="st" style="left:14px;top:945px">Ready</span>
<span class="st" style="left:71px;top:945px">Calculate</span>
<svg style="left:150px;top:943px" width="16" height="17" viewBox="0 0 16 17"><rect x="1.5" y="2.5" width="13" height="13" fill="#fdfdfd" stroke="#6a6a6a" stroke-width="1"/><rect x="7" y="2" width="8" height="3.5" fill="#6a6a6a"/><circle cx="3.4" cy="4.2" r="3.9" fill="#6a6a6a" stroke="#f3f3f3" stroke-width="1"/><path d="M4 7.5 H6 M7.5 7.5 H9.5 M11 7.5 H12.5 M4 10.5 H6 M7.5 10.5 H9.5 M11 10.5 H12.5 M4 13.5 H6 M7.5 13.5 H9.5 M11 13.5 H12.5" stroke="#6a6a6a" stroke-width="1" fill="none"/></svg>
<svg style="left:188px;top:943px" width="21" height="19" viewBox="0 0 21 19"><path d="M6.2 2.8 A7.2 7.2 0 0 0 7.5 16.4" fill="none" stroke="#5a5a5a" stroke-width="1.1" stroke-dasharray="3.2 1.5"/><path d="M8.5 1 V8.6 M6.3 6.4 L8.5 8.8 L10.7 6.4" fill="none" stroke="#4a4a4a" stroke-width="1.1"/><path d="M12 7.4 H16.6 M14.6 5.4 L16.8 7.4 L14.6 9.4" fill="none" stroke="#4a4a4a" stroke-width="1.1"/><path d="M10.6 10.8 L19.6 18.2 M19.6 10.8 L10.6 18.2" stroke="#3a3a3a" stroke-width="1.9" fill="none"/></svg>
<b class="st" style="left:211px;top:945px;color:#333;letter-spacing:.15px">Accessibility: Investigate</b>
<i style="left:1554px;top:939px;width:50px;height:26px;background:#c6c6c6;"></i>
<svg style="left:1571px;top:944px" width="16" height="16" viewBox="0 0 16 16"><rect x="0" y="0" width="16" height="16" fill="#d2d2d2"/><path d="M.5 .5 H15.5 V15.5 H.5 Z M.5 5.5 H15.5 M.5 10.5 H15.5 M5.5 .5 V15.5 M10.5 .5 V15.5" fill="none" stroke="#6a6a6a" stroke-width="1"/></svg>
<svg style="left:1620px;top:944px" width="17" height="15" viewBox="0 0 17 15"><rect x=".5" y=".5" width="16" height="14" fill="none" stroke="#6a6a6a"/><rect x="4.5" y="2.5" width="8" height="10" fill="none" stroke="#6a6a6a"/><path d="M6.5 5.5 H10.5 M6.5 7.5 H10.5 M6.5 9.5 H10.5" stroke="#6a6a6a"/></svg>
<svg style="left:1670px;top:944px" width="17" height="16" viewBox="0 0 17 16"><rect x=".5" y=".5" width="16" height="15" fill="none" stroke="#6a6a6a"/><path d="M.5 9.5 H10.5 V.5 M5.5 .5 V9.5" fill="none" stroke="#6a6a6a"/></svg>
<i style="left:1711px;top:951px;width:10px;height:1px;background:#444;"></i>
<i style="left:1727px;top:952px;width:125px;height:1px;background:#5a5a5a;"></i>
<i style="left:1774px;top:945px;width:6px;height:14px;background:#444;"></i>
<i style="left:1789px;top:949px;width:1px;height:8px;background:#555;"></i>
<i style="left:1858px;top:951px;width:10px;height:1px;background:#444;"></i>
<i style="left:1862px;top:947px;width:1px;height:9px;background:#444;"></i>
<span class="st" style="left:1884px;top:945px">80%</span>
<i style="left:1920px;top:0px;width:1px;height:966px;background:#1e1e1e;"></i>
</div></body></html>
